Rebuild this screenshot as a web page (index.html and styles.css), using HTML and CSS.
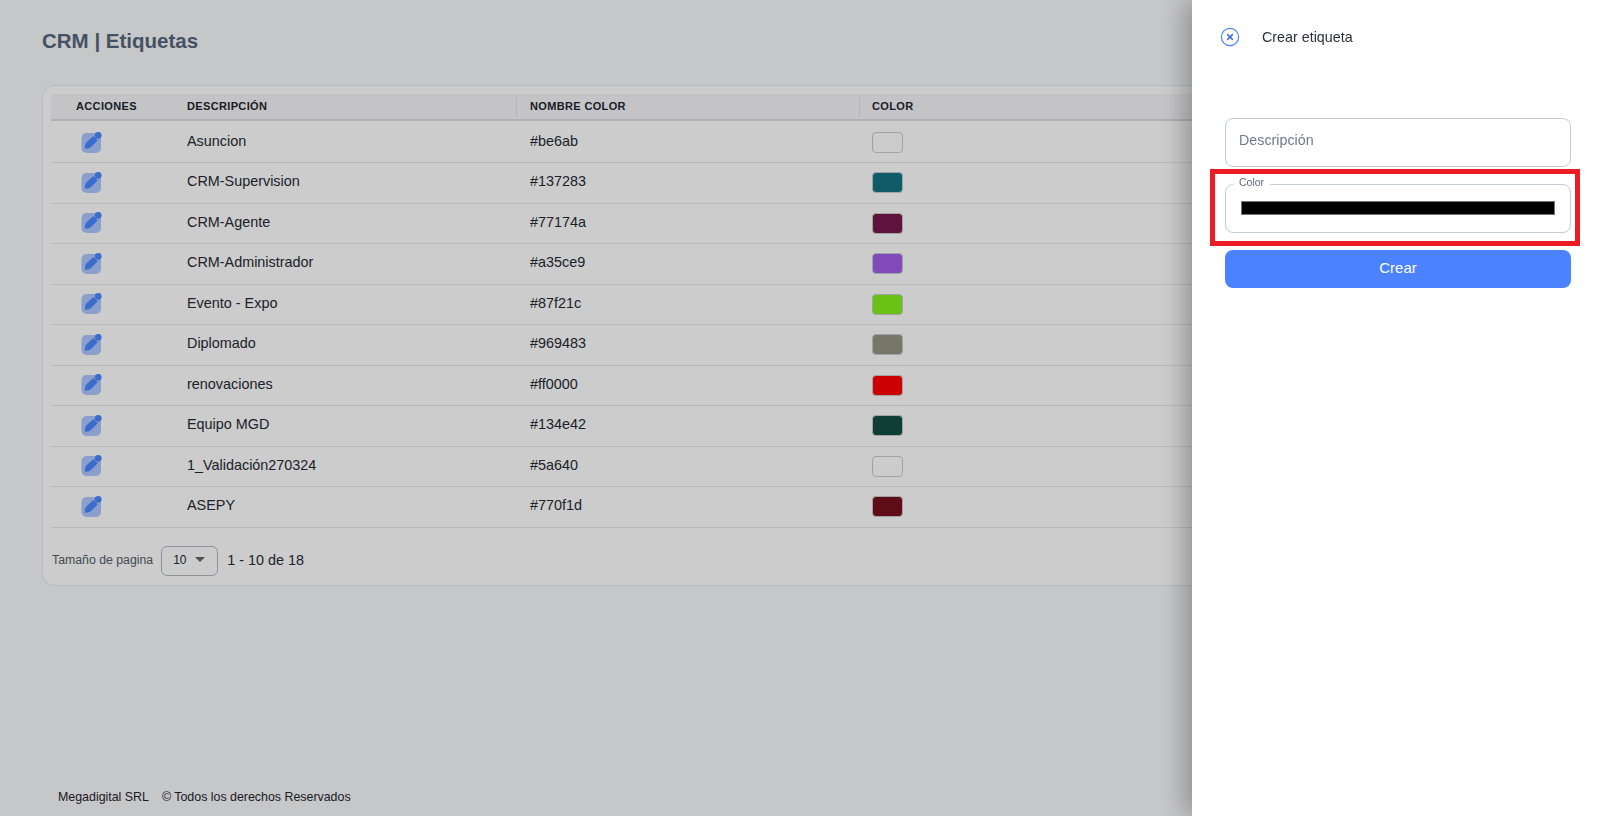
FILE: index.html
```html
<!DOCTYPE html>
<html>
<head>
    <meta charset="UTF-8">
    <meta name="viewport" content="width=device-width, initial-scale=1, shrink-to-fit=no">
    <title>CRM | Etiquetas</title>
    <link rel="stylesheet" href="styles.css">
</head>
<body>
    <svg class="icon-defs" width="0" height="0">
        <symbol id="edit" viewBox="0 0 22 22">
            <rect x="0.500" y="2" width="19.500" height="20" rx="5" fill="#4a82ff" opacity="0.45"/>
            <path d="M4 17.500c-.7-3 .8-5.500 2-6.700l6.500-5.800 4.300 4.300-6.300 6.300c-1.500 1.500-4 2.900-6.500 1.900z" fill="#4a88ff"/>
            <circle cx="17.200" cy="4.300" r="3.400" fill="#4a88ff"/>
        </symbol>
    </svg>

    <main class="page">
        <h1>CRM | Etiquetas</h1>

        <section class="card">
            <table>
                <thead>
                    <tr>
                        <th class="col-actions">ACCIONES</th>
                        <th class="col-desc">DESCRIPCIÓN</th>
                        <th class="col-name">NOMBRE COLOR</th>
                        <th class="col-color">COLOR</th>
                    </tr>
                </thead>
                <tbody>
                    <tr>
                        <td class="actions"><svg class="edit"><use href="#edit"/></svg></td>
                        <td>Asuncion</td>
                        <td>#be6ab</td>
                        <td class="color"><span class="swatch" style="background:#be6ab"></span></td>
                    </tr>
                    <tr>
                        <td class="actions"><svg class="edit"><use href="#edit"/></svg></td>
                        <td>CRM-Supervision</td>
                        <td>#137283</td>
                        <td class="color"><span class="swatch" style="background:#137283"></span></td>
                    </tr>
                    <tr>
                        <td class="actions"><svg class="edit"><use href="#edit"/></svg></td>
                        <td>CRM-Agente</td>
                        <td>#77174a</td>
                        <td class="color"><span class="swatch" style="background:#77174a"></span></td>
                    </tr>
                    <tr>
                        <td class="actions"><svg class="edit"><use href="#edit"/></svg></td>
                        <td>CRM-Administrador</td>
                        <td>#a35ce9</td>
                        <td class="color"><span class="swatch" style="background:#a35ce9"></span></td>
                    </tr>
                    <tr>
                        <td class="actions"><svg class="edit"><use href="#edit"/></svg></td>
                        <td>Evento - Expo</td>
                        <td>#87f21c</td>
                        <td class="color"><span class="swatch" style="background:#87f21c"></span></td>
                    </tr>
                    <tr>
                        <td class="actions"><svg class="edit"><use href="#edit"/></svg></td>
                        <td>Diplomado</td>
                        <td>#969483</td>
                        <td class="color"><span class="swatch" style="background:#969483"></span></td>
                    </tr>
                    <tr>
                        <td class="actions"><svg class="edit"><use href="#edit"/></svg></td>
                        <td>renovaciones</td>
                        <td>#ff0000</td>
                        <td class="color"><span class="swatch" style="background:#ff0000"></span></td>
                    </tr>
                    <tr>
                        <td class="actions"><svg class="edit"><use href="#edit"/></svg></td>
                        <td>Equipo MGD</td>
                        <td>#134e42</td>
                        <td class="color"><span class="swatch" style="background:#134e42"></span></td>
                    </tr>
                    <tr>
                        <td class="actions"><svg class="edit"><use href="#edit"/></svg></td>
                        <td>1_Validación270324</td>
                        <td>#5a640</td>
                        <td class="color"><span class="swatch" style="background:#5a640"></span></td>
                    </tr>
                    <tr>
                        <td class="actions"><svg class="edit"><use href="#edit"/></svg></td>
                        <td>ASEPY</td>
                        <td>#770f1d</td>
                        <td class="color"><span class="swatch" style="background:#770f1d"></span></td>
                    </tr>
                </tbody>
            </table>

            <div class="pager">
                <span class="pager-label">Tamaño de pagina</span>
                <div class="pager-size">
                    <span>10</span>
                    <span class="caret"></span>
                </div>
                <span class="pager-range">1 - 10 de 18</span>
            </div>
        </section>

        <footer>
            <span>Megadigital SRL</span>
            <span>© Todos los derechos Reservados</span>
        </footer>
    </main>

    <div class="backdrop"></div>

    <aside class="drawer">
        <header class="drawer-head">
            <svg class="close" viewBox="0 0 20 20" width="20" height="20">
                <circle cx="10" cy="10" r="8.6" fill="none" stroke="#4a82ff" stroke-width="1.2"/>
                <path d="M7.6 7.6l4.8 4.8M12.4 7.6l-4.8 4.8" stroke="#3b6fe0" stroke-width="1.5" stroke-linecap="round"/>
            </svg>
            <span>Crear etiqueta</span>
        </header>

        <form class="drawer-form">
            <input class="field" type="text" placeholder="Descripción">
            <fieldset class="field-color">
                <legend>Color</legend>
                <input type="color" value="#000000">
            </fieldset>
            <button type="button">Crear</button>
        </form>

        <div class="highlight"></div>
    </aside>
</body>
</html>
```

FILE: styles.css
```css
* {
    box-sizing: border-box;
}

html, body {
    margin: 0;
    height: 100%;
    overflow: hidden;
}

body {
    font-family: "Liberation Sans", Arial, sans-serif;
    background-color: #f8f9fb;
    color: #1f2530;
}

.icon-defs {
    position: absolute;
}

.page {
    height: 816px;
    padding: 28px 22px 0 42px;
    display: flex;
    flex-direction: column;
}

h1 {
    margin: 0 0 32px;
    font-size: 20.5px;
    line-height: 25px;
    font-weight: 700;
    color: #56677c;
}

.card {
    background-color: #ffffff;
    border: 1px solid #e6e8eb;
    border-radius: 12px;
    padding: 8px;
    height: 501px;
}

table {
    width: 100%;
    border-collapse: collapse;
    table-layout: fixed;
}

thead tr {
    background-color: #f5f6f8;
    border-bottom: 2px solid #dadde2;
}

th {
    height: 26px;
    padding: 0 14px 1px;
    font-size: 11px;
    font-weight: 700;
    letter-spacing: 0.35px;
    text-align: left;
    color: #1f2530;
    position: relative;
}

.col-actions {
    width: 122px;
    padding-left: 25px;
}

.col-desc {
    width: 343px;
}

.col-name {
    width: 343px;
}

.col-name::before, .col-color::before {
    content: "";
    position: absolute;
    left: 0;
    top: 3px;
    bottom: 2px;
    width: 1px;
    background-color: #dfe1e5;
}

.col-color {
    padding-left: 13px;
}

td {
    height: 40.5px;
    padding: 0 14px 3px;
    font-size: 14.4px;
    border-bottom: 1px solid #e6e8eb;
    color: #252a35;
}

td.actions {
    padding: 0 0 2px 30px;
}

td.color {
    padding: 0 13px;
}

tbody tr:first-child td {
    height: 42.5px;
    padding-top: 2px;
}

.edit {
    display: block;
    width: 22px;
    height: 22px;
}

.swatch {
    display: block;
    width: 31px;
    height: 21px;
    border: 1px solid #c9cbce;
    border-radius: 4px;
}

.pager {
    display: flex;
    align-items: center;
    margin-top: 18px;
    padding-left: 1px;
}

.pager-label {
    font-size: 12.3px;
    color: #555d68;
    margin: 0 8px 2px 0;
}

.pager-size {
    width: 57px;
    height: 30px;
    border: 1px solid #b3b8bf;
    border-radius: 6px;
    display: flex;
    align-items: center;
    padding: 0 0 2px 11px;
    gap: 8px;
    font-size: 12px;
    margin-right: 9px;
}

.caret {
    width: 0;
    height: 0;
    border-left: 5.5px solid transparent;
    border-right: 5.5px solid transparent;
    border-top: 5.5px solid #5f6670;
}

.pager-range {
    font-size: 14.4px;
    color: #252a35;
    margin-bottom: 2px;
}

footer {
    margin-top: auto;
    padding: 0 0 12px 16px;
    font-size: 12.4px;
    line-height: 14px;
    display: flex;
    gap: 13px;
    color: #1f2530;
}

.backdrop {
    position: fixed;
    inset: 0;
    background-color: rgba(0, 0, 0, 0.2);
}

.drawer {
    position: fixed;
    top: 0;
    right: 0;
    bottom: 0;
    width: 410px;
    background-color: #ffffff;
    box-shadow: -8px 0 24px rgba(0, 0, 0, 0.28);
}

.drawer-head {
    display: flex;
    align-items: center;
    gap: 22px;
    padding: 27px 0 0 28px;
    height: 47px;
    font-size: 14.3px;
    color: #2a303a;
}

.drawer-form {
    padding: 71px 31px 0 33px;
    display: flex;
    flex-direction: column;
}

.field {
    height: 49px;
    border: 1px solid #c3ccd6;
    border-radius: 8px;
    padding: 0 13px 6px;
    font-family: inherit;
    font-size: 14.3px;
    outline: none;
}

.field::placeholder {
    color: #6e7a8a;
    opacity: 1;
}

.field-color {
    margin: 9px 0 0;
    padding: 0 15px;
    height: 57px;
    border: 1px solid #c3ccd6;
    border-radius: 8px;
    min-width: 0;
}

.field-color legend {
    margin: -1px 0 0 -8px;
    padding: 0 6px 4px;
    font-size: 10.5px;
    line-height: 12px;
    color: #5c6878;
}

.field-color input {
    display: block;
    width: 100%;
    height: 14px;
    margin-top: 9px;
    padding: 0;
    border: none;
    background: none;
}

.field-color input::-webkit-color-swatch-wrapper {
    padding: 0;
}

.field-color input::-webkit-color-swatch {
    border: 1px solid #777777;
}

button {
    margin-top: 17px;
    height: 38px;
    border: none;
    border-radius: 8px;
    background-color: #4a82ff;
    color: #ffffff;
    font-family: inherit;
    font-size: 15px;
    padding-bottom: 5px;
}

/* red box from whoever took the screenshot */
.highlight {
    position: absolute;
    left: 18px;
    top: 169px;
    width: 370px;
    height: 77px;
    border: 5px solid #ec1c24;
}
```
